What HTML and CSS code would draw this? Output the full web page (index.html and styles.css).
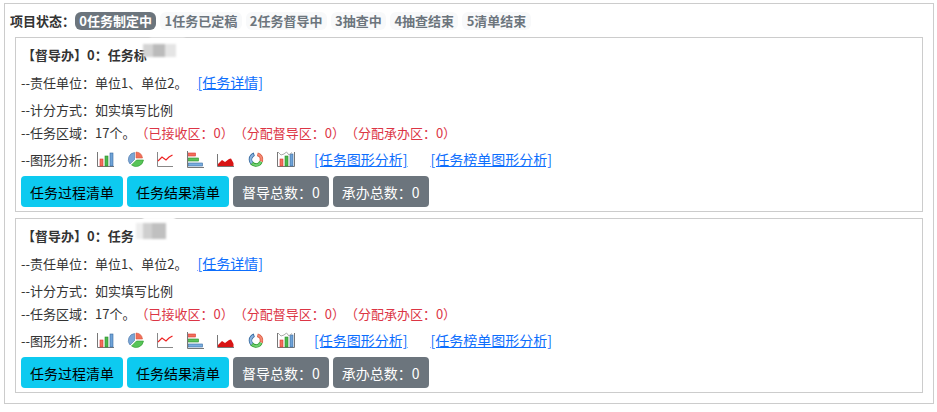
FILE: index.html
```html
<!DOCTYPE html>
<html lang="zh-CN">
<head>
  <meta charset="UTF-8" />
  <meta name="viewport" content="width=device-width, initial-scale=1.0" />
  <title>项目状态</title>
  <link rel="stylesheet" href="styles.css">
</head>
<body>
  <svg class="defs" width="0" height="0">
    <symbol id="i-bar" viewBox="0 0 18 17">
      <path d="M0.5 1V15.5H17" fill="none" stroke="#777"/>
      <rect x="3" y="8" width="3" height="7" fill="#f0705a" stroke="#d33"  stroke-width=".6"/>
      <rect x="8" y="5" width="3" height="10" fill="#4cb84c" stroke="#2a8a2a" stroke-width=".6"/>
      <rect x="13" y="2" width="3" height="13" fill="#6fa3d8" stroke="#36699e" stroke-width=".6"/>
    </symbol>
    <symbol id="i-pie" viewBox="0 0 18 17">
      <path d="M7.5 1.5A7 7 0 0 0 3 13L7.5 8.5Z" fill="#7ba6d6" stroke="#4a76a8" stroke-width=".6"/>
      <path d="M9 1A7 7 0 0 1 15.5 7H9Z" fill="#f0705a" stroke="#d9593f" stroke-width=".6"/>
      <path d="M4.5 14L9.5 9H16.5A7.5 7.5 0 0 1 4.5 14Z" fill="#58c458" stroke="#2f9a2f" stroke-width=".6"/>
    </symbol>
    <symbol id="i-line" viewBox="0 0 18 17">
      <path d="M0.5 1V15.5H16" fill="none" stroke="#888"/>
      <path d="M1 10L5 6L9 9L12 6L15.5 4" fill="none" stroke="#e22" stroke-width="1.2"/>
    </symbol>
    <symbol id="i-hbar" viewBox="0 0 18 17">
      <path d="M0.5 0V16.5H17" fill="none" stroke="#777"/>
      <rect x="1.5" y="2" width="7" height="3" fill="#f0705a" stroke="#d33" stroke-width=".6"/>
      <rect x="1.5" y="7" width="10" height="3" fill="#5cc25c" stroke="#2a8a2a" stroke-width=".6"/>
      <rect x="1.5" y="12" width="14" height="3" fill="#7aaee0" stroke="#36699e" stroke-width=".6"/>
    </symbol>
    <symbol id="i-area" viewBox="0 0 18 17">
      <path d="M0.5 3V15.5H17" fill="none" stroke="#777"/>
      <path d="M1 15V13L5 9L8 11L12 8L14 7.5L16.5 12V15Z" fill="#d81515"/>
    </symbol>
    <symbol id="i-ring" viewBox="0 0 18 17">
      <circle cx="9" cy="8.500" r="5.500" fill="none" stroke="#36699e" stroke-width="3.600" stroke-dasharray="11 24" transform="rotate(135 9 8.500)"/>
      <circle cx="9" cy="8.500" r="5.500" fill="none" stroke="#d9593f" stroke-width="3.600" stroke-dasharray="9 26" transform="rotate(-75 9 8.500)"/>
      <circle cx="9" cy="8.500" r="5.500" fill="none" stroke="#2f9a2f" stroke-width="3.600" stroke-dasharray="11 24" transform="rotate(25 9 8.500)"/>
      <circle cx="9" cy="8.500" r="5.500" fill="none" stroke="#8ab4e0" stroke-width="2" stroke-dasharray="10 25" transform="rotate(137 9 8.500)"/>
      <circle cx="9" cy="8.500" r="5.500" fill="none" stroke="#f58a75" stroke-width="2" stroke-dasharray="8 27" transform="rotate(-72 9 8.500)"/>
      <circle cx="9" cy="8.500" r="5.500" fill="none" stroke="#70d070" stroke-width="2" stroke-dasharray="10 25" transform="rotate(27 9 8.500)"/>
    </symbol>
    <symbol id="i-mix" viewBox="0 0 18 17">
      <path d="M0.5 1V15.5H17.5V1" fill="none" stroke="#777"/>
      <rect x="3" y="8" width="3" height="7" fill="#f0705a" stroke="#d33" stroke-width=".6"/>
      <rect x="8" y="5" width="3" height="10" fill="#4cb84c" stroke="#2a8a2a" stroke-width=".6"/>
      <rect x="13" y="3" width="3" height="12" fill="#6fa3d8" stroke="#36699e" stroke-width=".6"/>
      <path d="M1 1L4 4L7 3L9.500 1L12 4L15 1.500" fill="none" stroke="#aaa"/>
    </symbol>
  </svg>

  <div class="wrap">
    <div class="status-bar">
      <span class="status-label">项目状态&#xFF1A;</span>
      <span class="pill active">0任务制定中</span>
      <span class="pill">1任务已定稿</span>
      <span class="pill">2任务督导中</span>
      <span class="pill">3抽查中</span>
      <span class="pill">4抽查结束</span>
      <span class="pill">5清单结束</span>
    </div>

    <div class="card">
      <div class="row row-title">【督导办】0&#xFF1A;任务标</div>
      <div class="mosaic mosaic-a"></div>
      <div class="row row-unit">--责任单位&#xFF1A;单位1、单位2。<a class="link detail" href="#">[任务详情]</a></div>
      <div class="row row-score">--计分方式&#xFF1A;如实填写比例</div>
      <div class="row row-area">--任务区域&#xFF1A;17个。<span class="red">&#xFF08;已接收区&#xFF1A;0&#xFF09;</span><span class="red">&#xFF08;分配督导区&#xFF1A;0&#xFF09;</span><span class="red">&#xFF08;分配承办区&#xFF1A;0&#xFF09;</span></div>
      <div class="row row-chart">
        <span>--图形分析&#xFF1A;</span>
        <svg class="icon"><use href="#i-bar"/></svg>
        <svg class="icon"><use href="#i-pie"/></svg>
        <svg class="icon"><use href="#i-line"/></svg>
        <svg class="icon"><use href="#i-hbar"/></svg>
        <svg class="icon"><use href="#i-area"/></svg>
        <svg class="icon"><use href="#i-ring"/></svg>
        <svg class="icon"><use href="#i-mix"/></svg>
        <a class="link chart-a" href="#">[任务图形分析]</a>
        <a class="link chart-b" href="#">[任务榜单图形分析]</a>
      </div>
      <div class="btns">
        <button class="btn info">任务过程清单</button>
        <button class="btn info">任务结果清单</button>
        <button class="btn gray">督导总数&#xFF1A;0</button>
        <button class="btn gray">承办总数&#xFF1A;0</button>
      </div>
    </div>

    <div class="card">
      <div class="row row-title">【督导办】0&#xFF1A;任务</div>
      <div class="mosaic mosaic-b"></div>
      <div class="row row-unit">--责任单位&#xFF1A;单位1、单位2。<a class="link detail" href="#">[任务详情]</a></div>
      <div class="row row-score">--计分方式&#xFF1A;如实填写比例</div>
      <div class="row row-area">--任务区域&#xFF1A;17个。<span class="red">&#xFF08;已接收区&#xFF1A;0&#xFF09;</span><span class="red">&#xFF08;分配督导区&#xFF1A;0&#xFF09;</span><span class="red">&#xFF08;分配承办区&#xFF1A;0&#xFF09;</span></div>
      <div class="row row-chart">
        <span>--图形分析&#xFF1A;</span>
        <svg class="icon"><use href="#i-bar"/></svg>
        <svg class="icon"><use href="#i-pie"/></svg>
        <svg class="icon"><use href="#i-line"/></svg>
        <svg class="icon"><use href="#i-hbar"/></svg>
        <svg class="icon"><use href="#i-area"/></svg>
        <svg class="icon"><use href="#i-ring"/></svg>
        <svg class="icon"><use href="#i-mix"/></svg>
        <a class="link chart-a" href="#">[任务图形分析]</a>
        <a class="link chart-b" href="#">[任务榜单图形分析]</a>
      </div>
      <div class="btns">
        <button class="btn info">任务过程清单</button>
        <button class="btn info">任务结果清单</button>
        <button class="btn gray">督导总数&#xFF1A;0</button>
        <button class="btn gray">承办总数&#xFF1A;0</button>
      </div>
    </div>
  </div>
</body>
</html>
```

FILE: styles.css
```css
html, body {
  margin: 0;
  padding: 0;
  background: #fff;
  color: #333;
  font-family: "Noto Sans CJK SC", "Open Sans", sans-serif;
  font-size: 13px;
  overflow: hidden;
}

.defs {
  position: absolute;
}

.wrap {
  box-sizing: border-box;
  width: 930px;
  height: 401px;
  margin: 3px 0 0 4px;
  padding: 7px 5px 0;
  border: 1px solid #ccc;
}

.status-bar {
  display: flex;
  align-items: center;
  height: 19px;
  margin-bottom: 7px;
  font-weight: 700;
  line-height: 18px;
}

.status-label {
  color: #333;
}

.pill {
  margin-right: 4px;
  padding: 0 4.3px;
  border-radius: 6px;
  background: #f8f9fa;
  color: #6c757d;
  line-height: 18px;
}

.pill.active {
  background: #6c757d;
  color: #fff;
}

.card {
  position: relative;
  box-sizing: border-box;
  width: 908px;
  height: 174.5px;
  margin: 0 5px 6.5px;
  padding: 3px 5px 4px;
  border: 1px solid #ccc;
}

.row {
  display: flex;
  align-items: center;
  white-space: pre;
}

.row-title {
  height: 27px;
  padding-left: 1px;
  font-weight: 700;
}

.row-unit {
  height: 28px;
}

.row-score {
  height: 26px;
}

.row-area {
  height: 20px;
}

.row-chart {
  height: 34px;
}

.link {
  color: #0d6efd;
  font-size: 14px;
  text-decoration: underline;
}

.detail {
  margin-left: 10px;
}

.red {
  color: #dc3545;
}

.icon {
  width: 18px;
  height: 17px;
  margin-right: 12px;
}

.row-chart span {
  margin-right: 2px;
}

.chart-a {
  margin-left: 7px;
}

.chart-b {
  margin-left: 23px;
}

.btns {
  display: flex;
  gap: 4px;
}

.btn {
  height: 31px;
  padding: 0 9px;
  border: none;
  border-radius: 4px;
  font-family: inherit;
  font-size: 14px;
}

.btn.info {
  background: #0dcaf0;
  color: #000;
}

.btn.gray {
  background: #6c757d;
  color: #fff;
}

/* pixelated patch covering part of the title, its halo also hides the card border */
.mosaic {
  position: absolute;
  filter: blur(1.2px);
  background-color: #f2f2f2;
  box-shadow: 8px -5px 0 1px #fff;
}

.mosaic-a {
  left: 127px;
  top: 6px;
  width: 33px;
  height: 13px;
  background-image: linear-gradient(90deg, #d4d4d4 0 30%, #bbb 30% 66%, #e4e4e4 66%);
}

.mosaic-b {
  left: 120px;
  top: 4px;
  width: 30px;
  height: 16px;
  background-image: linear-gradient(90deg, #eee 0 22%, #cfcfcf 22% 55%, #c0c0c0 55%);
}
```
